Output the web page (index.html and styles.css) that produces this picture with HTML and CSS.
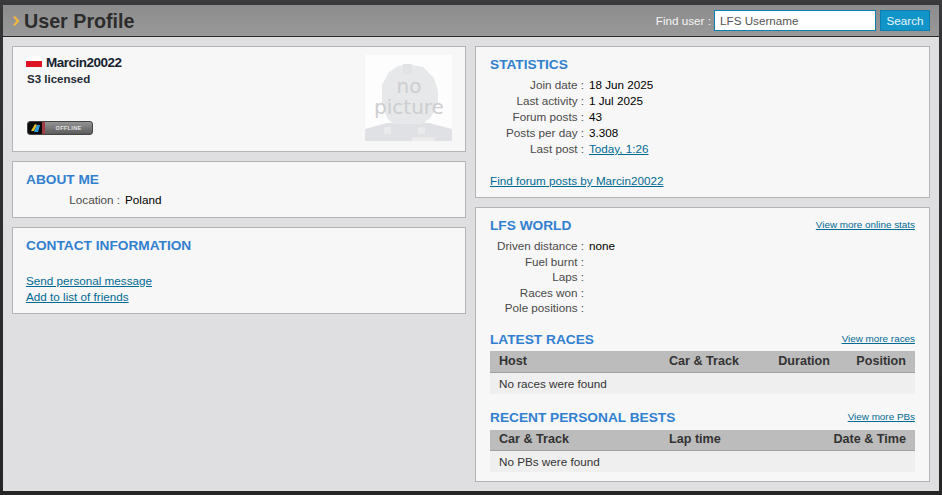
FILE: index.html
```html
<!DOCTYPE html>
<html lang="en">
<head>
<meta charset="utf-8">
<title>User Profile</title>
<link rel="stylesheet" href="styles.css">
</head>
<body>
<div class="page">
  <header class="topbar">
    <h1 class="title">
      <svg class="chev" width="6" height="10" viewBox="0 0 6 10"><path d="M1 0.5 L5 5 L1 9.5" fill="none" stroke="#f5b83c" stroke-width="2"/></svg>
      User Profile
    </h1>
    <form class="finder">
      <label class="finder-label" for="u">Find user :</label>
      <input class="finder-input" id="u" type="text" value="LFS Username">
      <button class="finder-btn" type="button">Search</button>
    </form>
  </header>
  <main class="columns">
    <div class="col">
      <section class="panel identity">
        <div class="id-text">
          <div class="name-row">
            <svg class="flag" width="16" height="11" viewBox="0 0 16 11"><rect width="16" height="5" y="0" fill="#ffffff"/><rect width="16" height="6" y="5" fill="#dc1423"/></svg>
            <span class="name">Marcin20022</span>
          </div>
          <div class="licence">S3 licensed</div>
          <div class="badge">
            <svg class="badge-logo" width="14" height="12" viewBox="0 0 14 12"><rect width="14" height="12" fill="#0c0c0c"/><path d="M3 9 L7 2 L9 3 L6 9Z" fill="#e8c52c"/><path d="M6 10 L9 3 L12 3 L10 10Z" fill="#2f9fe0"/></svg>
            <span class="badge-bar"></span>
            <span class="badge-text">OFFLINE</span>
          </div>
        </div>
        <svg class="nopic" width="87" height="86" viewBox="0 0 87 86">
          <defs><filter id="soft" color-interpolation-filters="sRGB"><feGaussianBlur stdDeviation="0.7"/></filter></defs>
          <rect width="87" height="86" fill="#fdfdfe"/>
          <g filter="url(#soft)">
            <path d="M0 74 L22 68 L64 68 L87 74 L87 86 L0 86Z" fill="#e0e1e4"/>
            <path d="M43 9 L58 12 L69 23 L73 36 L73 48 L66 62 L58 69 L28 69 L22 63 L17 48 L17 30 L24 17 L33 11Z" fill="#e7e8e9"/>
            <rect x="38" y="9" width="9" height="10" fill="#e1e2e4"/>
            <rect x="19" y="72" width="7" height="7" fill="#e9eaeb"/>
            <rect x="53" y="72" width="7" height="7" fill="#e9eaeb"/>
            <rect x="47" y="82" width="23" height="4" fill="#ebebec"/>
          </g>
          <text class="nopic-text" x="44" y="38" text-anchor="middle">no</text>
          <text class="nopic-text" x="44" y="59" text-anchor="middle">picture</text>
        </svg>
      </section>
      <section class="panel about">
        <h2 class="heading">ABOUT ME</h2>
        <dl class="facts">
          <dt>Location :</dt><dd>Poland</dd>
        </dl>
      </section>
      <section class="panel contact">
        <h2 class="heading">CONTACT INFORMATION</h2>
        <div class="contact-links">
          <a href="#">Send personal message</a>
          <a href="#">Add to list of friends</a>
        </div>
      </section>
    </div>
    <div class="col">
      <section class="panel stats">
        <h2 class="heading">STATISTICS</h2>
        <dl class="facts">
          <dt>Join date :</dt><dd>18 Jun 2025</dd>
          <dt>Last activity :</dt><dd>1 Jul 2025</dd>
          <dt>Forum posts :</dt><dd>43</dd>
          <dt>Posts per day :</dt><dd>3.308</dd>
          <dt>Last post :</dt><dd><a href="#">Today, 1:26</a></dd>
        </dl>
        <a class="find-posts" href="#">Find forum posts by Marcin20022</a>
      </section>
      <section class="panel world">
        <div class="head-row">
          <h2 class="heading">LFS WORLD</h2>
          <a class="more" href="#">View more online stats</a>
        </div>
        <dl class="facts facts-world">
          <dt>Driven distance :</dt><dd>none</dd>
          <dt>Fuel burnt :</dt><dd></dd>
          <dt>Laps :</dt><dd></dd>
          <dt>Races won :</dt><dd></dd>
          <dt>Pole positions :</dt><dd></dd>
        </dl>
        <div class="head-row races-head">
          <h2 class="heading">LATEST RACES</h2>
          <a class="more" href="#">View more races</a>
        </div>
        <div class="grid-head races-grid">
          <span>Host</span><span>Car &amp; Track</span><span class="r">Duration</span><span class="r">Position</span>
        </div>
        <div class="grid-empty">No races were found</div>
        <div class="head-row pbs-head">
          <h2 class="heading">RECENT PERSONAL BESTS</h2>
          <a class="more" href="#">View more PBs</a>
        </div>
        <div class="grid-head pbs-grid">
          <span>Car &amp; Track</span><span>Lap time</span><span class="r">Date &amp; Time</span>
        </div>
        <div class="grid-empty">No PBs were found</div>
      </section>
    </div>
  </main>
</div>
</body>
</html>
```
FILE: styles.css
```css
* { box-sizing: border-box; }
html, body { margin: 0; height: 100%; }
body {
  background: linear-gradient(#3a3a3d 0, #333335 40px, #262626 100%);
  font-family: "Liberation Sans", Arial, sans-serif;
  font-size: 11.7px;
  color: #000;
  overflow: hidden;
  padding: 5px 3px 4px;
}
a { color: #006a94; text-decoration: underline; }
.page { background: #dfdfe1; height: 486px; }
.topbar {
  height: 32px;
  background: linear-gradient(#8c8c8c, #999);
  border-bottom: 1px solid #2a2a2a;
  display: flex;
  align-items: center;
  justify-content: space-between;
  padding: 0 9px 0 10px;
}
.title {
  margin: 0;
  font-size: 19.7px;
  font-weight: 700;
  color: #2c2c2c;
  display: flex;
  align-items: center;
  line-height: 30px;
}
.chev { display: block; flex: none; margin-right: 5px; }
.finder { display: flex; align-items: center; margin: 0; }
.finder-label { color: #f4f4f4; font-size: 11.7px; margin-right: 3px; }
.finder-input {
  width: 162px;
  height: 21px;
  border: 1px solid #0a7fb0;
  background: #fff;
  padding: 0 5px;
  font: 11.7px "Liberation Sans", Arial, sans-serif;
  color: #555;
  outline: none;
}
.finder-btn {
  width: 50px;
  height: 21px;
  margin-left: 4px;
  border: 1px solid #0b7db0;
  background: #1194c8;
  color: #e8f6fc;
  font: 11.7px "Liberation Sans", Arial, sans-serif;
  padding: 0;
}
.columns {
  display: grid;
  grid-template-columns: 454px 455px;
  column-gap: 9px;
  padding: 9px 0 0 9px;
}
.col { display: flex; flex-direction: column; gap: 9px; }
.panel {
  background: #f7f7f7;
  border: 1px solid #b4b4b4;
}
.identity {
  height: 106px;
  display: flex;
  justify-content: space-between;
  padding: 8px 13px;
}
.name-row { display: flex; align-items: flex-start; gap: 4px; height: 16px; }
.flag { display: block; margin-top: 1px; }
.name { font-weight: 700; font-size: 13.5px; line-height: 15px; color: #16222f; letter-spacing: -0.5px; }
.licence { font-weight: 700; font-size: 11.5px; color: #1f2a33; line-height: 16px; margin: 0 0 0 1px; }
.badge {
  margin: 34px 0 0 1px;
  width: 66px;
  height: 14px;
  border-radius: 3px;
  background: linear-gradient(#939393, #5c5c5c);
  border: 1px solid #444;
  display: flex;
  align-items: center;
  overflow: hidden;
}
.badge-logo { display: block; flex: none; }
.badge-bar { width: 3px; height: 12px; background: #a33c44; flex: none; }
.badge-text {
  flex: 1;
  text-align: center;
  font-size: 5.6px;
  font-weight: 700;
  line-height: 12px;
  color: #e2e2e2;
  letter-spacing: 0.3px;
}
.nopic { display: block; flex: none; }
.nopic-text { font-family: "DejaVu Sans", sans-serif; font-size: 20px; fill: #cdced0; }
.heading {
  margin: 0;
  padding-top: 1px;
  font-size: 13.7px;
  font-weight: 700;
  color: #3180cf;
  line-height: 18px;
}
.facts {
  margin: 3px 0 0;
  display: grid;
  grid-template-columns: 94px 1fr;
  column-gap: 5px;
}
.facts dt { text-align: right; color: #4a4a4a; line-height: 16px; }
.facts dd { margin: 0; line-height: 16px; min-height: 16px; }
.facts-world { grid-auto-rows: 15.5px; }
.about { height: 57px; padding: 8px 13px; }
.contact { height: 87px; padding: 8px 13px; }
.contact-links { display: flex; flex-direction: column; margin-top: 18px; line-height: 16px; }
.stats { height: 152px; padding: 8px 14px; }
.find-posts { display: block; margin-top: 16px; line-height: 16px; }
.world { height: 275px; padding: 8px 14px; }
.head-row { display: flex; justify-content: space-between; align-items: flex-start; height: 19px; }
.more { font-size: 9.9px; line-height: 18px; }
.races-head { margin-top: 14.5px; }
.pbs-head { margin-top: 14px; }
.grid-head {
  margin-top: 2px;
  height: 22px;
  background: #bcbcbc;
  border-bottom: 1px solid #a0a0a0;
  display: grid;
  align-items: start;
  padding: 0 9px;
  font-size: 12.6px;
  line-height: 20px;
  font-weight: 700;
  color: #333;
}
.grid-head .r { text-align: right; }
.races-grid { grid-template-columns: 170px 85px 76px 1fr; }
.pbs-grid { grid-template-columns: 170px 85px 1fr; height: 21px; line-height: 18px; margin-top: 3px; }
.grid-empty {
  height: 21px;
  background: #efefef;
  padding: 0 9px;
  line-height: 21px;
  color: #333;
}
```
